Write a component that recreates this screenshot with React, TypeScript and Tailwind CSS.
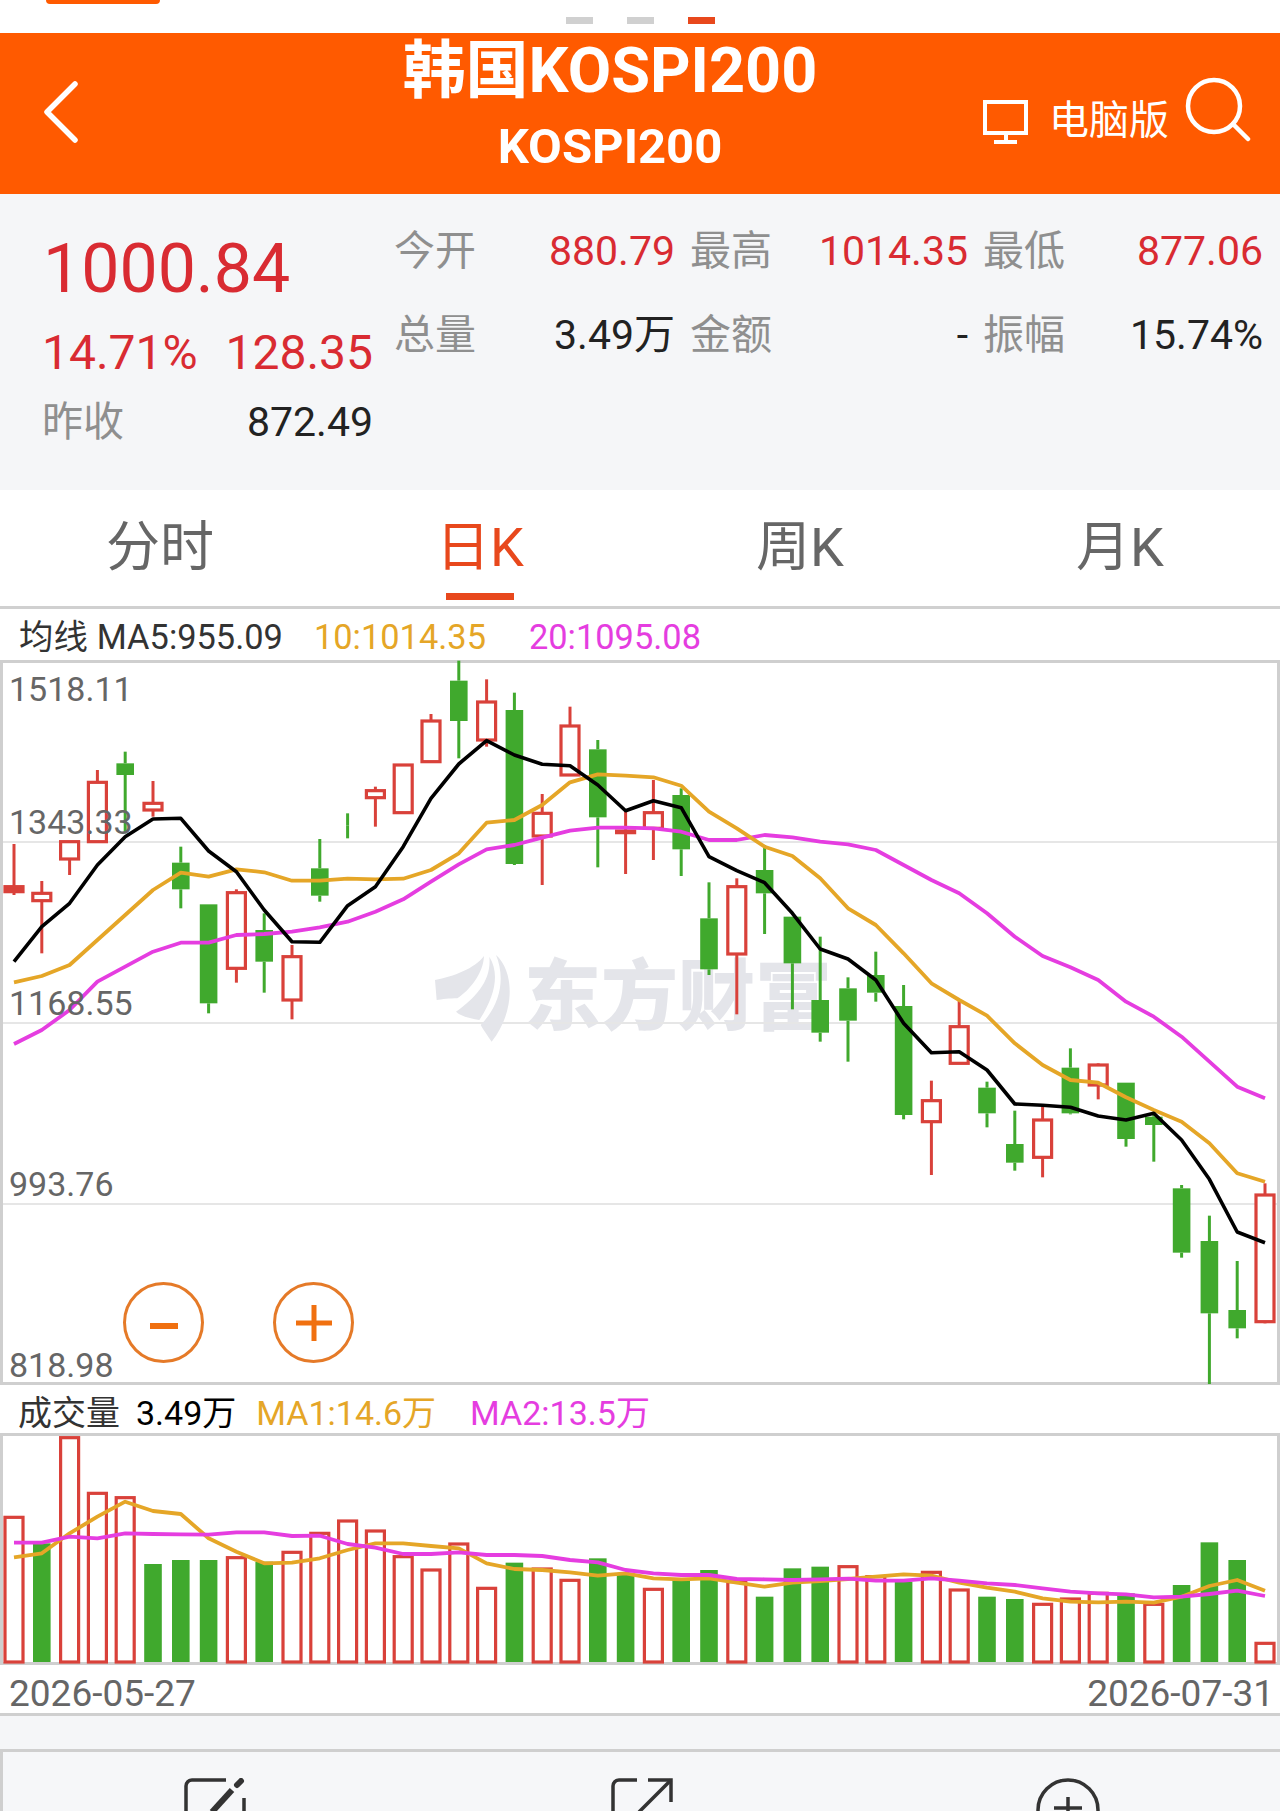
import React from "react";

type C = [number, number, number, number, "r" | "g"];
const candles: C[] = [
  [672, 800, 815, 825, "r"], [783, 820, 842, 1000, "r"], [665, 665, 717, 765, "r"], [450, 487, 665, 665, "r"],
  [395, 430, 465, 640, "g"], [483, 550, 570, 590, "r"], [680, 728, 808, 865, "g"], [853, 853, 1150, 1180, "g"],
  [808, 818, 1045, 1088, "r"], [880, 930, 1025, 1118, "g"], [975, 1010, 1140, 1198, "r"], [657, 745, 827, 845, "g"],
  [580, 617, 617, 655, "g"], [500, 512, 533, 620, "r"], [433, 435, 578, 580, "r"], [282, 303, 425, 425, "r"],
  [122, 182, 303, 415, "g"], [178, 246, 360, 380, "r"], [218, 270, 732, 735, "g"], [522, 580, 648, 795, "r"],
  [260, 318, 465, 468, "r"], [360, 388, 592, 742, "g"], [575, 633, 638, 762, "r"], [480, 578, 625, 720, "r"],
  [505, 525, 688, 768, "g"], [787, 895, 1048, 1065, "g"], [775, 800, 1002, 1183, "r"], [675, 750, 820, 942, "g"],
  [890, 890, 1030, 1168, "g"], [950, 1140, 1238, 1265, "g"], [1072, 1105, 1202, 1325, "g"], [995, 1065, 1118, 1145, "g"],
  [1095, 1158, 1485, 1498, "g"], [1382, 1442, 1505, 1665, "r"], [1140, 1220, 1330, 1330, "r"], [1385, 1403, 1480, 1522, "g"],
  [1472, 1572, 1628, 1652, "g"], [1455, 1500, 1612, 1672, "r"], [1285, 1343, 1480, 1483, "g"], [1330, 1335, 1395, 1438, "r"],
  [1388, 1388, 1557, 1580, "g"], [1475, 1490, 1515, 1625, "g"], [1695, 1705, 1898, 1913, "g"], [1787, 1863, 2080, 2292, "g"],
  [1923, 2070, 2125, 2155, "g"], [1690, 1725, 2105, 2110, "r"],
];
const ma5 = [1025, 920, 850, 735, 650, 597, 595, 693, 755, 870, 965, 967, 857, 800, 680, 535, 432, 362, 405, 433, 437, 495, 572, 542, 563, 710, 752, 788, 880, 987, 1017, 1080, 1210, 1298, 1295, 1350, 1452, 1456, 1462, 1488, 1500, 1480, 1560, 1678, 1836, 1868];
const ma10 = [1087, 1068, 1035, 960, 885, 810, 758, 770, 748, 757, 782, 782, 776, 778, 776, 750, 700, 608, 600, 555, 487, 463, 467, 472, 497, 575, 625, 680, 708, 775, 865, 915, 1000, 1090, 1140, 1187, 1270, 1335, 1380, 1388, 1432, 1470, 1505, 1570, 1660, 1685];
const ma20 = [1272, 1230, 1170, 1085, 1040, 995, 968, 968, 945, 942, 935, 922, 905, 875, 838, 785, 733, 688, 675, 653, 632, 623, 623, 625, 635, 660, 660, 645, 652, 665, 673, 690, 735, 780, 820, 880, 950, 1008, 1042, 1080, 1145, 1190, 1250, 1325, 1400, 1435];

const vols: [number, "r" | "g"][] = [
  [352, "r"], [430, "g"], [113, "r"], [280, "r"], [293, "r"], [492, "g"], [480, "g"], [480, "g"], [473, "r"], [485, "g"], [457, "r"], [400, "r"],
  [363, "r"], [393, "r"], [470, "r"], [510, "r"], [432, "r"], [565, "r"], [488, "g"], [507, "r"], [541, "r"], [475, "g"], [525, "g"], [568, "r"],
  [540, "g"], [510, "g"], [545, "r"], [590, "g"], [505, "g"], [500, "g"], [500, "r"], [530, "r"], [545, "g"], [517, "r"], [570, "r"], [590, "g"],
  [597, "g"], [613, "r"], [597, "r"], [580, "r"], [580, "g"], [613, "r"], [555, "g"], [427, "g"], [480, "g"], [730, "r"],
];
const vma1 = [472, 460, 400, 350, 305, 333, 342, 415, 455, 490, 488, 475, 450, 430, 430, 438, 445, 490, 507, 510, 517, 527, 520, 535, 538, 535, 548, 560, 548, 543, 537, 530, 523, 527, 548, 563, 575, 595, 605, 607, 605, 608, 590, 558, 540, 572];
const vma2 = [428, 428, 410, 415, 400, 402, 403, 404, 397, 397, 408, 407, 432, 443, 462, 462, 457, 465, 465, 468, 480, 487, 510, 520, 525, 525, 537, 538, 540, 538, 536, 542, 542, 535, 542, 550, 555, 565, 575, 580, 583, 592, 590, 582, 572, 588];

const GREEN = "#40a92d";
const RED = "#d9413a";
const ORANGE = "#e5a627";
const MAGENTA = "#e53de0";
const X = (i: number) => 14 + 27.8 * i;
const K = (z: number) => 620 + z / 3;
const V = (z: number) => 1400 + z / 3;
const pts = (a: number[], f: (z: number) => number) => a.map((z, i) => `${X(i).toFixed(1)},${f(z).toFixed(1)}`).join(" ");

function Candle({ c, i }: { c: C; i: number }) {
  const [h, t, b, l, k] = c;
  const x = X(i);
  const col = k === "r" ? RED : GREEN;
  const thin = b - t < 18;
  return (
    <g>
      <line x1={x} x2={x} y1={K(h)} y2={K(t)} stroke={col} strokeWidth={3} />
      <line x1={x} x2={x} y1={K(b)} y2={K(l)} stroke={col} strokeWidth={3} />
      {k === "r" ? (
        <rect x={x - 9} y={K(t)} width={18} height={K(b) - K(t)} fill={thin ? RED : "#fff"} stroke={RED} strokeWidth={3.2} />
      ) : (
        b > t && <rect x={x - 8.8} y={K(t)} width={17.6} height={K(b) - K(t)} fill={GREEN} />
      )}
    </g>
  );
}

const labels: [string, string][] = [
  ["1518.11", "top-[10px]"],
  ["1343.33", "top-[143px]"],
  ["1168.55", "top-[324px]"],
  ["993.76", "top-[505px]"],
  ["818.98", "top-[686px]"],
];

function Pair({ label, value, red }: { label: string; value: string; red?: boolean }) {
  return (
    <div className="flex justify-between items-center">
      <span className="text-[#8f8f8f]">{label}</span>
      <span className={red ? "text-[#d92b32]" : "text-[#222]"}>{value}</span>
    </div>
  );
}

export default function App() {
  return (
    <div className="w-[1280px] h-[1811px] overflow-hidden bg-white [font-family:Roboto,'Noto_Sans_CJK_SC',sans-serif]">
      {/* top strip */}
      <div className="relative h-[33px] bg-white">
        <div className="absolute left-[46px] top-0 w-[114px] h-[4px] rounded-b-[8px] bg-[#ff5a00]" />
        <div className="flex justify-center gap-[34px] pt-[17px]">
          <span className="w-[27px] h-[7px] bg-[#d0d0d0]" />
          <span className="w-[27px] h-[7px] bg-[#d0d0d0]" />
          <span className="w-[27px] h-[7px] bg-[#e8481c]" />
        </div>
      </div>

      {/* header */}
      <header className="flex h-[161px] bg-[#ff5a00] text-white">
        <svg className="ml-[43px] mt-[48px] w-[36px] h-[62px]" viewBox="0 0 36 62" fill="none" stroke="#fff" strokeWidth="5.5" strokeLinecap="round" strokeLinejoin="round">
          <path d="M32 3 L4 31 L32 59" />
        </svg>
        <div className="ml-[221px] w-[620px] flex flex-col items-center font-bold">
          <div className="mt-[3px] text-[63px] leading-[70px]">韩国KOSPI200</div>
          <div className="mt-[13px] text-[49px] leading-[56px]">KOSPI200</div>
        </div>
        <svg className="ml-[63px] mt-[67px] w-[46px] h-[44px]" viewBox="0 0 46 44" fill="none" stroke="#fff" strokeWidth="4">
          <rect x="2" y="2" width="41" height="31" />
          <path d="M23 33V41M11 42H34" />
        </svg>
        <div className="ml-[20px] mt-[60px] text-[40px] leading-[56px] whitespace-nowrap">电脑版</div>
        <svg className="ml-[16px] mt-[44px] w-[66px] h-[66px]" viewBox="0 0 66 66" fill="none" stroke="#fff" strokeWidth="4.5" strokeLinecap="round">
          <circle cx="29" cy="29" r="26" />
          <path d="M48 47L63 62" />
        </svg>
      </header>

      {/* quote */}
      <section className="flex h-[296px] bg-[#f5f6f8]">
        <div className="ml-[42px] w-[331px]">
          <div className="mt-[36px] pl-[1px] text-[68px] leading-[78px] text-[#d92b32]">1000.84</div>
          <div className="mt-[17px] flex justify-between text-[48px] leading-[56px] text-[#d92b32]">
            <span>14.71%</span>
            <span>128.35</span>
          </div>
          <div className="mt-[13px] flex justify-between items-center text-[41px] leading-[56px]">
            <span className="text-[#8f8f8f]">昨收</span>
            <span className="text-[#222]">872.49</span>
          </div>
        </div>
        <div className="ml-[21px] mt-[29px] w-[870px] h-[140px] grid grid-cols-[281px_278px_280px] gap-x-[15px] gap-y-[28px] text-[41px] leading-[56px]">
          <Pair label="今开" value="880.79" red />
          <Pair label="最高" value="1014.35" red />
          <Pair label="最低" value="877.06" red />
          <Pair label="总量" value="3.49万" />
          <Pair label="金额" value="-" />
          <Pair label="振幅" value="15.74%" />
        </div>
      </section>

      {/* tabs */}
      <nav className="grid grid-cols-4 h-[119px] border-b-[3px] border-[#d0d0d0] bg-white text-[54px] leading-[60px] text-[#666]">
        <div className="pt-[28px] text-center">分时</div>
        <div className="relative pt-[28px] text-center text-[#e8481c]">
          日K
          <span className="absolute left-[126px] top-[103px] w-[68px] h-[7px] bg-[#e8481c]" />
        </div>
        <div className="pt-[28px] text-center">周K</div>
        <div className="pt-[28px] text-center">月K</div>
      </nav>

      {/* MA legend */}
      <div className="flex items-center h-[51px] pt-[5px] pl-[19px] text-[34.4px] leading-[40px] text-[#333] whitespace-nowrap">
        <span>均线</span>
        <span className="ml-[9px]">MA5:955.09</span>
        <span className="ml-[31px] text-[#e5a627]">10:1014.35</span>
        <span className="ml-[43px] text-[#e53de0]">20:1095.08</span>
      </div>

      {/* K chart */}
      <div className="relative h-[725px] border-[3px] border-[#cfcfcf]">
        <div className="absolute left-[521px] top-[290px] text-[77px] leading-[90px] font-black text-[#e4e5ea] whitespace-nowrap">东方财富</div>
        <svg className="relative block w-[1274px] h-[719px] overflow-visible" viewBox="3 663 1274 719" fill="none">
          <g stroke="#e6e6e6" strokeWidth="2">
            <line x1="3" x2="1277" y1="842" y2="842" />
            <line x1="3" x2="1277" y1="1023" y2="1023" />
            <line x1="3" x2="1277" y1="1204" y2="1204" />
          </g>
          <g transform="translate(420 930) scale(.3333)" fill="#e4e5ea">
            <path d="M45 150C100 140 165 115 192 78C190 130 150 180 112 205C90 205 65 208 50 210Z" />
            <path d="M208 80C240 130 225 200 178 270C150 265 125 260 108 245C170 200 215 150 208 80Z" />
            <path d="M228 75C280 120 290 240 215 335C205 320 190 300 182 285C245 220 255 140 228 75Z" />
          </g>
          {candles.map((c, i) => (
            <Candle key={i} c={c} i={i} />
          ))}
          <polyline points={pts(ma20, K)} stroke={MAGENTA} strokeWidth="3.8" strokeLinejoin="round" />
          <polyline points={pts(ma10, K)} stroke={ORANGE} strokeWidth="3.8" strokeLinejoin="round" />
          <polyline points={pts(ma5, K)} stroke="#000" strokeWidth="3.6" strokeLinejoin="round" />
        </svg>
        {labels.map(([t, cls]) => (
          <div key={t} className={`absolute left-[6px] text-[34px] leading-[33px] text-[#666] ${cls}`}>
            {t}
          </div>
        ))}
        <button className="absolute left-[120px] top-[619px] flex h-[81px] w-[81px] items-center justify-center rounded-full border-[3px] border-[#e57a28]">
          <span className="mt-[6px] h-[6px] w-[28px] bg-[#f07010]" />
        </button>
        <button className="absolute left-[270px] top-[619px] flex h-[81px] w-[81px] items-center justify-center rounded-full border-[3px] border-[#e57a28]">
          <svg className="h-[36px] w-[36px]" viewBox="0 0 36 36" stroke="#f07010" strokeWidth="5">
            <path d="M0 18H36M18 0V36" />
          </svg>
        </button>
      </div>

      {/* volume legend */}
      <div className="flex items-center h-[48px] pt-[7px] pl-[18px] text-[34px] leading-[40px] text-[#333] whitespace-nowrap">
        <span>成交量</span>
        <span className="ml-[16px] text-black">3.49万</span>
        <span className="ml-[20px] text-[#e5a627]">MA1:14.6万</span>
        <span className="ml-[34px] text-[#e53de0]">MA2:13.5万</span>
      </div>

      {/* volume chart */}
      <div className="h-[232px] border-[3px] border-[#cfcfcf]">
        <svg className="block w-[1274px] h-[226px] overflow-visible" viewBox="3 1436 1274 226" fill="none">
          {vols.map(([z, k], i) =>
            k === "r" ? (
              <rect key={i} x={X(i) - 9} y={V(z)} width={18} height={1662 - V(z)} fill="#fff" stroke={RED} strokeWidth={3.2} />
            ) : (
              <rect key={i} x={X(i) - 8.8} y={V(z)} width={17.6} height={1662 - V(z)} fill={GREEN} />
            ),
          )}
          <polyline points={pts(vma1, V)} stroke={ORANGE} strokeWidth="3.8" strokeLinejoin="round" />
          <polyline points={pts(vma2, V)} stroke={MAGENTA} strokeWidth="3.8" strokeLinejoin="round" />
        </svg>
      </div>

      {/* dates */}
      <div className="flex justify-between items-center h-[51px] pt-[9px] pl-[9px] pr-[6px] border-b-[3px] border-[#cfcfcf] text-[37px] leading-[40px] text-[#666]">
        <span>2026-05-27</span>
        <span>2026-07-31</span>
      </div>

      <div className="h-[33px] bg-[#f5f6f8]" />

      {/* toolbar */}
      <div className="grid grid-cols-3 h-[62px] border-t-[3px] border-l-[3px] border-[#cfcfcf] bg-[#f6f7f9]">
        <div className="flex justify-center pt-[26px] pr-[4px]">
          <svg className="w-[64px] h-[64px] shrink-0" viewBox="0 0 64 64" fill="none" stroke="#333" strokeWidth="3.5">
            <path d="M44 2H10a6 6 0 0 0-6 6V64M62 20V64" />
            <path d="M59 3L55 7" strokeWidth="6" strokeLinecap="round" />
            <path d="M50 12L30 34" strokeWidth="6" />
          </svg>
        </div>
        <div className="flex justify-center pt-[26px]">
          <svg className="w-[64px] h-[64px] shrink-0" viewBox="0 0 64 64" fill="none" stroke="#333" strokeWidth="3.5">
            <path d="M28 2H10a6 6 0 0 0-6 6V64" />
            <path d="M39 2H62V24" />
            <path d="M62 2L30 34" />
          </svg>
        </div>
        <div className="flex justify-center pt-[26px] pl-[2px]">
          <svg className="w-[64px] h-[64px] shrink-0" viewBox="0 0 64 64" fill="none" stroke="#333" strokeWidth="3.5">
            <circle cx="32" cy="32" r="30" />
            <path d="M32 19V46M18 30H46" />
          </svg>
        </div>
      </div>
    </div>
  );
}
